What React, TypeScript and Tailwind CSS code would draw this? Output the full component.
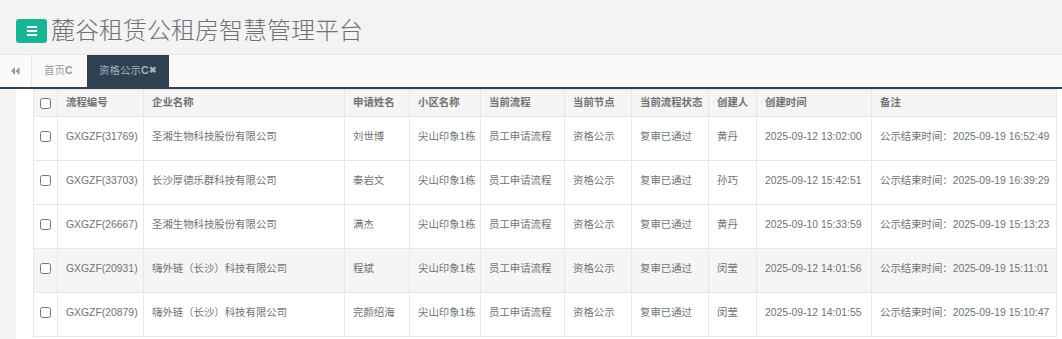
import React from 'react';

const FONT = { fontFamily: '"Liberation Sans", "Noto Sans CJK SC", sans-serif' };

type Row = {
  id: string;
  company: string;
  name: string;
  estate: string;
  flow: string;
  node: string;
  status: string;
  creator: string;
  created: string;
  note: string;
};

const ROWS: Row[] = [
  { id: 'GXGZF(31769)', company: '圣湘生物科技股份有限公司', name: '刘世博', estate: '尖山印象1栋', flow: '员工申请流程', node: '资格公示', status: '复审已通过', creator: '黄丹', created: '2025-09-12 13:02:00', note: '公示结束时间：2025-09-19 16:52:49' },
  { id: 'GXGZF(33703)', company: '长沙厚德乐群科技有限公司', name: '秦岩文', estate: '尖山印象1栋', flow: '员工申请流程', node: '资格公示', status: '复审已通过', creator: '孙巧', created: '2025-09-12 15:42:51', note: '公示结束时间：2025-09-19 16:39:29' },
  { id: 'GXGZF(26667)', company: '圣湘生物科技股份有限公司', name: '满杰', estate: '尖山印象1栋', flow: '员工申请流程', node: '资格公示', status: '复审已通过', creator: '黄丹', created: '2025-09-10 15:33:59', note: '公示结束时间：2025-09-19 15:13:23' },
  { id: 'GXGZF(20931)', company: '嗨外链（长沙）科技有限公司', name: '程斌', estate: '尖山印象1栋', flow: '员工申请流程', node: '资格公示', status: '复审已通过', creator: '闵莹', created: '2025-09-12 14:01:56', note: '公示结束时间：2025-09-19 15:11:01' },
  { id: 'GXGZF(20879)', company: '嗨外链（长沙）科技有限公司', name: '完颜绍海', estate: '尖山印象1栋', flow: '员工申请流程', node: '资格公示', status: '复审已通过', creator: '闵莹', created: '2025-09-12 14:01:55', note: '公示结束时间：2025-09-19 15:10:47' },
];

const HEADERS = ['流程编号', '企业名称', '申请姓名', '小区名称', '当前流程', '当前节点', '当前流程状态', '创建人', '创建时间', '备注'];
const WIDTHS = [24, 86, 201, 65, 71, 84, 67, 77, 48, 115, 185];

const Check = () => (
  <input type="checkbox" className="m-0 w-[11px] h-[11px] align-middle accent-[#1ab394]" />
);

export default function App() {
  return (
    <div className="w-[1062px] h-[339px] overflow-hidden bg-[#f3f3f4] text-[#6f7274]" style={FONT}>
      {/* top header */}
      <div className="h-[55px] border-b border-[#e7eaec] flex items-center pt-[7px] pl-4">
        <div className="w-[31px] h-[24px] bg-[#1ab394] rounded-[3px] flex flex-col items-center justify-center gap-[2px]">
          <span className="block w-[10px] h-[2px] bg-white" />
          <span className="block w-[10px] h-[2px] bg-white" />
          <span className="block w-[10px] h-[2px] bg-white" />
        </div>
        <h1 className="ml-1 text-[24px] leading-none font-light text-[#6f7274]">麓谷租赁公租房智慧管理平台</h1>
      </div>

      {/* tabs */}
      <div className="h-[34px] bg-[#fafafa] border-b-2 border-[#2f4050] flex text-[10.5px]">
        <div className="w-[32px] h-full border-r border-[#e7eaec] flex items-center justify-center">
          <svg width="9" height="8" viewBox="0 0 9 8">
            <path d="M4 0 L0 4 L4 8 Z M8.5 0 L4.5 4 L8.5 8 Z" fill="#999" />
          </svg>
        </div>
        <div className="w-[55px] h-full flex items-center pl-[12px] text-[#999]">
          首页<b className="font-bold">C</b>
        </div>
        <div className="w-[82px] h-full bg-[#2f4050] flex items-center pl-[12px] text-[#a7b1c2]">
          资格公示<b className="font-bold">C</b><span className="text-[9px] font-bold">✖</span>
        </div>
      </div>

      {/* content */}
      <div className="flex h-full">
        <div className="w-4 shrink-0" />
        <div className="flex-1 bg-white pl-[17px]">
          <table className="table-fixed border-collapse w-[1023px] text-[10.4px]">
            <colgroup>
              {WIDTHS.map((w, i) => (
                <col key={i} style={{ width: w }} />
              ))}
            </colgroup>
            <thead>
              <tr className="bg-[#f5f5f5]">
                <th className="h-[27px] border border-[#e7e7e7] text-center align-middle p-0">
                  <Check />
                </th>
                {HEADERS.map((h) => (
                  <th key={h} className="h-[27px] border border-[#e7e7e7] text-left font-semibold px-2 py-0 whitespace-nowrap">
                    {h}
                  </th>
                ))}
              </tr>
            </thead>
            <tbody>
              {ROWS.map((r, i) => (
                <tr key={r.id} className={i === 3 ? 'bg-[#f5f5f5]' : 'bg-white'}>
                  <td className="h-[44px] border border-[#e7e7e7] text-center p-0 pb-1">
                    <Check />
                  </td>
                  {[r.id, r.company, r.name, r.estate, r.flow, r.node, r.status, r.creator, r.created, r.note].map((v, j) => (
                    <td key={j} className="h-[44px] border border-[#e7e7e7] px-2 pt-0 pb-1 whitespace-nowrap overflow-hidden">
                      {v}
                    </td>
                  ))}
                </tr>
              ))}
            </tbody>
          </table>
        </div>
      </div>
    </div>
  );
}
